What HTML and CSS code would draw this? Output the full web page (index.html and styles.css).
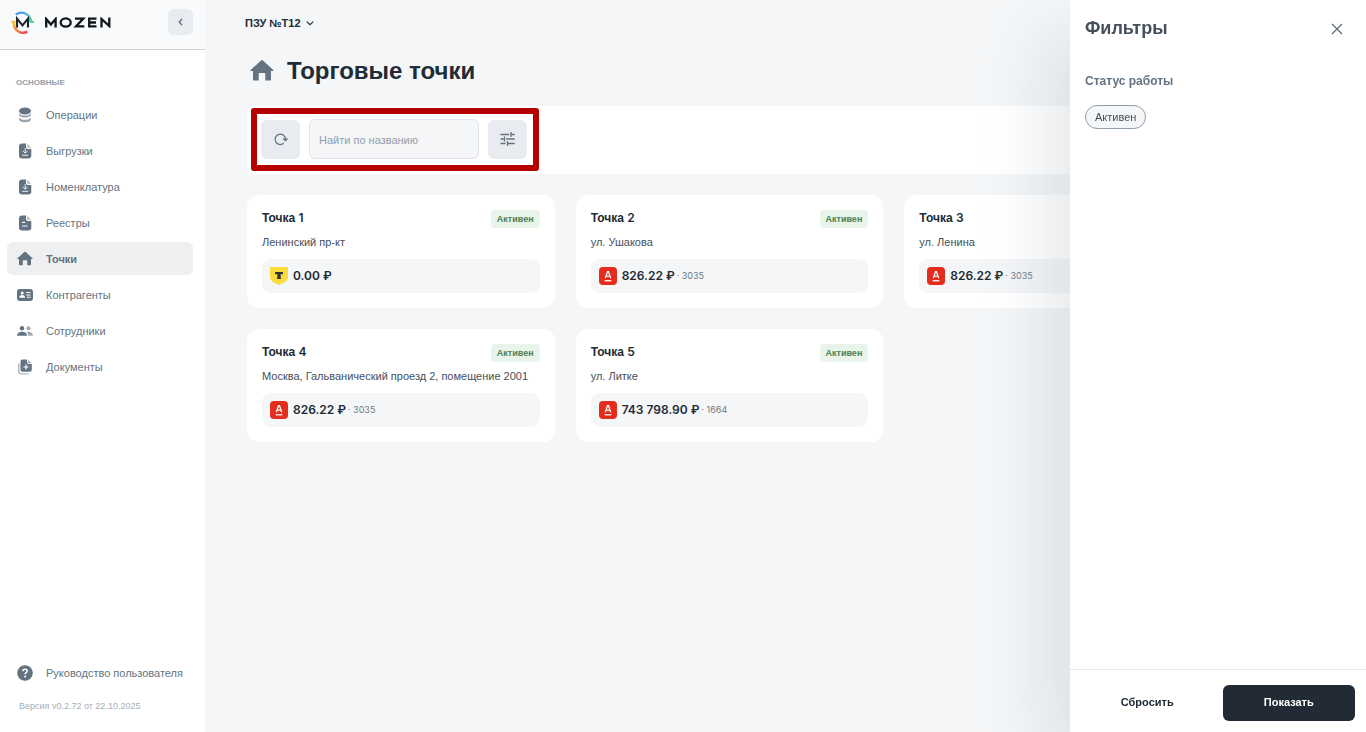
FILE: index.html
```html
<!DOCTYPE html>
<html lang="ru">
<head>
<meta charset="utf-8">
<meta name="viewport" content="width=device-width, initial-scale=1">
<title>Торговые точки</title>
<link rel="stylesheet" href="styles.css">
</head>
<body>
<svg class="sprite" aria-hidden="true">
  <symbol id="home" viewBox="0 0 24 24"><path d="M12.700 1.300a1 1 0 0 0-1.400 0L.7 10.900c-.5.500-.2 1.100.4 1.100H3v8.700c0 .5.3.8.8.8h4.900v-6.700c0-.5.3-.8.8-.8h5c.5 0 .8.3.8.8v6.700h4.900c.5 0 .8-.3.8-.8V12h1.900c.6 0 .9-.6.400-1.100z"/></symbol>
  <symbol id="file-down" viewBox="0 0 16 16"><path d="M5 .5h4v3.500a2 2 0 0 0 2 2h3.300v6.500a3 3 0 0 1-3 3H5a3 3 0 0 1-3-3v-9a3 3 0 0 1 3-3z"/><path opacity=".5" d="M10.200.7l4 4h-3a1 1 0 0 1-1-1z"/><path d="M8.200 5v5M5.900 7.900L8.200 10.200 10.500 7.900M5.200 12.300h6" fill="none" stroke="#fff" stroke-opacity=".85"/></symbol>
  <symbol id="file-text" viewBox="0 0 16 16"><path d="M5 .5h4v3.500a2 2 0 0 0 2 2h3.300v6.500a3 3 0 0 1-3 3H5a3 3 0 0 1-3-3v-9a3 3 0 0 1 3-3z"/><path opacity=".5" d="M10.200.7l4 4h-3a1 1 0 0 1-1-1z"/><path d="M5.200 7.300h3M5.200 11h5.400" fill="none" stroke="#fff" stroke-width="1.200"/></symbol>
  <symbol id="alfa" viewBox="0 0 18 18"><rect width="18" height="18" rx="4" fill="#e42d1c"/><path d="M6.300 11.200L8.500 4.600h1L11.700 11.200M7.100 9.100h3.800" fill="none" stroke="#fff" stroke-width="1.300"/><path d="M5.700 13.100h6.600v1.300H5.700z" fill="#fff"/></symbol>
  <symbol id="tbank" viewBox="0 0 18 18"><path d="M0 0h18v9.500c0 3-1.600 4.700-3.500 5.800L9 18l-5.500-2.700C1.600 14.200 0 12.500 0 9.500z" fill="#fadc3c"/><path d="M5 5h8v2.800c-.6-.6-1.300-.7-2.300-.7v3.600c0 .7.300 1.100.8 1.300h-5c.5-.2.800-.6.8-1.300V7.100c-1 0-1.700.1-2.300.7z" fill="#333"/></symbol>
</svg>
<div class="app">
  <aside class="sidebar">
    <header class="brand">
      <a class="logo" href="#" aria-label="MOZEN">
        <svg class="logo-mark" viewBox="0 0 24 24" fill="none" aria-hidden="true">
          <defs>
            <linearGradient id="cool" x1="4" y1="2" x2="23" y2="11" gradientUnits="userSpaceOnUse"><stop stop-color="#4a8fe0"/><stop offset=".6" stop-color="#52b4e0"/><stop offset="1" stop-color="#4ade80"/></linearGradient>
            <linearGradient id="warm" x1="1" y1="11" x2="17" y2="23" gradientUnits="userSpaceOnUse"><stop stop-color="#f5cf35"/><stop offset=".45" stop-color="#f28a3c"/><stop offset="1" stop-color="#e8365f"/></linearGradient>
          </defs>
          <path d="M5 3.800A10 10 0 0 1 21 11.400h2.800M20 8v3.400" stroke="url(#cool)" stroke-width="2.300"/>
          <path d="M.2 11.600H3.200A9.500 9.500 0 0 0 17 21.500" stroke="url(#warm)" stroke-width="2.600"/>
          <path d="M6.300 17.300V8l5.700 7 5.700-7v9.300" stroke="#1c2530" stroke-width="2.200"/>
        </svg>
        <svg class="logo-word" viewBox="0 0 66 11" fill="none" stroke="#11161d" stroke-width="2.300" aria-hidden="true">
          <path d="M1.200 10.500V2l4.700 5.500L10.600 2v8.500"/><ellipse cx="20.700" cy="5.500" rx="5" ry="4.200"/><path d="M30 1.600h8.300L31 9.400h8.300M51.500 1.600H44.200v7.800h7.300M44 5.500h7M56.500 10.500V2l7.800 7V.5"/>
        </svg>
      </a>
      <button class="collapse" type="button" aria-label="Свернуть меню"><svg viewBox="0 0 12 12"><path d="M7 2.800L4.200 6 7 9.200"/></svg></button>
    </header>
    <nav class="nav">
      <h2 class="nav-title">Основные</h2>
      <a class="nav-item" href="#"><svg viewBox="0 0 16 16"><ellipse cx="8" cy="4" rx="6" ry="3.500"/><path opacity=".65" d="M2 6.300c1 1.600 3.300 2.300 6 2.300s5-.7 6-2.300v1.500c0 1.600-2.700 2.800-6 2.800S2 9.400 2 7.800zM2 10.500c1 1.600 3.300 2.300 6 2.300s5-.7 6-2.300v1.700c0 1.700-2.700 3-6 3s-6-1.300-6-3z"/></svg>Операции</a>
      <a class="nav-item" href="#"><svg><use href="#file-down"/></svg>Выгрузки</a>
      <a class="nav-item" href="#"><svg><use href="#file-down"/></svg>Номенклатура</a>
      <a class="nav-item" href="#"><svg><use href="#file-text"/></svg>Реестры</a>
      <a class="nav-item nav-item-active" href="#" aria-current="page"><svg><use href="#home"/></svg>Точки</a>
      <a class="nav-item" href="#"><svg viewBox="0 0 16 16"><rect y="2" width="16" height="12" rx="3"/><g fill="#fff"><circle cx="5.200" cy="6" r="1.500"/><path d="M2.300 10.800c0-1.800 1.200-2.700 2.900-2.700s2.900.9 2.900 2.700zM9.200 5h4.300v1.100H9.200zM9.200 7.400h4.300v1.100H9.200zM10 9.800h3.500v1H10z"/></g></svg>Контрагенты</a>
      <a class="nav-item" href="#"><svg viewBox="0 0 16 16"><circle cx="5" cy="5.200" r="2.200"/><path d="M0 12.800c0-2.700 2-4.100 5-4.100s5 1.400 5 4.100z"/><g opacity=".6"><circle cx="11.500" cy="5.200" r="2"/><path d="M11 12.800c.1-1.800-.5-3-1.500-4 3.500-.6 6.500.6 6.500 4z"/></g></svg>Сотрудники</a>
      <a class="nav-item" href="#"><svg viewBox="0 0 16 16"><path opacity=".5" d="M1 4.500h1.500V12A2.200 2.200 0 0 0 4.700 14.200h7v1.300H4.500A3.500 3.500 0 0 1 1 12z"/><path d="M5.500.5H10V3a2 2 0 0 0 2 2h2.800v5.800a2 2 0 0 1-2 2H5.500a2 2 0 0 1-2-2V2.500a2 2 0 0 1 2-2z"/><path opacity=".6" d="M11 .7l3.500 3.500H12a1 1 0 0 1-1-1z"/><path d="M6.500 8h5M9 5.500v5" stroke="#fff" stroke-width="1.200"/></svg>Документы</a>
    </nav>
    <footer class="sidebar-foot">
      <a class="nav-item" href="#"><svg viewBox="0 0 16 16"><circle cx="8" cy="8" r="7.800"/><path d="M5.900 6.200c0-1.300.9-2 2.200-2s2.100.7 2.100 1.800c0 1.500-2 1.600-2 3.200" fill="none" stroke="#fff" stroke-width="1.600"/><circle cx="8.100" cy="11.600" r="1" fill="#fff"/></svg>Руководство пользователя</a>
      <p class="version">Версия v0.2.72 от 22.10.2025</p>
    </footer>
  </aside>

  <main class="main">
    <button class="account" type="button">ПЗУ №T12<svg viewBox="0 0 12 12"><path d="M2.700 4.600L6 7.700l3.300-3.100"/></svg></button>
    <h1 class="page-title"><svg><use href="#home"/></svg>Торговые точки</h1>
    <section class="toolbar">
      <form class="tools">
        <button class="tool" type="button" aria-label="Обновить"><svg viewBox="0 0 16 16"><path d="M10.700 12.300A5.200 5.200 0 1 1 12.500 8.500M10.300 7.500l2.200 2 2-2"/></svg></button>
        <input class="search" type="search" placeholder="Найти по названию" aria-label="Найти по названию">
        <button class="tool" type="button" aria-label="Фильтры"><svg viewBox="0 0 16 16"><path d="M.5 3.500h8.700M11 1v5M11 3.500h3.700M.5 8h3.300M4.500 5.500v5M6.200 8h8.500M.5 12.500h5M7.500 10v5M7.500 12.500h7.200"/></svg></button>
      </form>
    </section>
    <section class="cards">
      <article class="card">
        <div class="card-head"><h3 class="card-title">Точка <span class="num">1</span></h3><span class="badge">Активен</span></div>
        <p class="address">Ленинский пр-кт</p>
        <div class="balance"><svg><use href="#tbank"/></svg><strong class="sum">0.00 ₽</strong></div>
      </article>
      <article class="card">
        <div class="card-head"><h3 class="card-title">Точка <span class="num">2</span></h3><span class="badge">Активен</span></div>
        <p class="address">ул. Ушакова</p>
        <div class="balance"><svg><use href="#alfa"/></svg><strong class="sum">826.22 ₽</strong><span class="tail">· 3035</span></div>
      </article>
      <article class="card">
        <div class="card-head"><h3 class="card-title">Точка <span class="num">3</span></h3><span class="badge">Активен</span></div>
        <p class="address">ул. Ленина</p>
        <div class="balance"><svg><use href="#alfa"/></svg><strong class="sum">826.22 ₽</strong><span class="tail">· 3035</span></div>
      </article>
      <article class="card">
        <div class="card-head"><h3 class="card-title">Точка <span class="num">4</span></h3><span class="badge">Активен</span></div>
        <p class="address">Москва, Гальванический проезд 2, помещение 2001</p>
        <div class="balance"><svg><use href="#alfa"/></svg><strong class="sum">826.22 ₽</strong><span class="tail">· 3035</span></div>
      </article>
      <article class="card">
        <div class="card-head"><h3 class="card-title">Точка <span class="num">5</span></h3><span class="badge">Активен</span></div>
        <p class="address">ул. Литке</p>
        <div class="balance"><svg><use href="#alfa"/></svg><strong class="sum">743 798.90 ₽</strong><span class="tail">· 1664</span></div>
      </article>
    </section>
  </main>

  <aside class="drawer" aria-label="Фильтры">
    <header class="drawer-head">
      <h2 class="drawer-title">Фильтры</h2>
      <button class="close" type="button" aria-label="Закрыть"><svg viewBox="0 0 12 12"><path d="M1 1l10 10M11 1L1 11"/></svg></button>
    </header>
    <div class="drawer-body">
      <h3 class="group-title">Статус работы</h3>
      <button class="chip" type="button">Активен</button>
    </div>
    <footer class="drawer-foot">
      <button class="btn" type="button">Сбросить</button>
      <button class="btn btn-dark" type="button">Показать</button>
    </footer>
  </aside>
</div>
</body>
</html>
```
FILE: styles.css
```css
* {
  box-sizing: border-box;
}

body {
  margin: 0;
  font-family: "Liberation Sans", Arial, sans-serif;
  font-size: 11px;
  line-height: 16px;
  color: #212b36;
  background: #f4f6f8;
}

h1, h2, h3, p {
  margin: 0;
}

button, input {
  font: inherit;
  color: inherit;
}

button {
  display: flex;
  align-items: center;
  justify-content: center;
  padding: 0;
  border: 0;
  background: none;
  cursor: pointer;
}

a {
  color: inherit;
  text-decoration: none;
}

svg {
  flex: none;
}

.sprite {
  position: absolute;
  width: 0;
  height: 0;
}

.app {
  display: flex;
  min-height: 100vh;
  overflow: hidden;
}

/* Sidebar */
.sidebar {
  display: flex;
  flex: none;
  flex-direction: column;
  width: 205px;
  background: #fff;
}

.brand {
  display: flex;
  align-items: center;
  justify-content: space-between;
  height: 50px;
  padding: 0 12px 5px 11px;
  background: #f9fafb;
  border-bottom: 1px solid #c9d1d9;
}

.logo {
  display: flex;
  align-items: center;
  gap: 11px;
}

.logo-mark {
  width: 23px;
  height: 23px;
}

.logo-word {
  width: 66px;
  height: 11px;
}

.collapse {
  width: 25px;
  height: 26px;
  border-radius: 6px;
  background: #e8ebef;
}

.collapse svg,
.account svg {
  width: 12px;
  height: 12px;
  fill: none;
  stroke: #55626f;
  stroke-width: 1.2;
}

.nav {
  display: flex;
  flex: 1;
  flex-direction: column;
  gap: 3px;
  padding: 25px 12px 0 7px;
}

.nav-title {
  padding: 0 9px 4px;
  font-size: 8px;
  line-height: 16px;
  color: #919eab;
  text-transform: uppercase;
}

.nav-item {
  display: flex;
  align-items: center;
  gap: 13px;
  height: 33px;
  padding: 0 10px;
  border-radius: 6px;
  color: #637381;
  white-space: nowrap;
}

.nav-item svg {
  width: 16px;
  height: 16px;
  fill: #637381;
}

.nav-item-active {
  font-weight: 700;
  background: #edeff1;
}

.sidebar-foot {
  padding: 0 12px 18px 7px;
}

.version {
  padding: 9px 12px 0;
  font-size: 9px;
  color: #a5afba;
}

/* Main column */
.main {
  flex: 1;
  min-width: 0;
  padding: 15px 42px 40px;
}

.account {
  gap: 3px;
  margin-left: -2px;
  font-weight: 700;
}

.account svg {
  stroke: #212b36;
}

.page-title {
  display: flex;
  align-items: center;
  gap: 13px;
  padding: 24px 3px 19px;
  font-size: 24px;
  line-height: 32px;
}

.page-title svg {
  width: 24px;
  height: 24px;
  fill: #637381;
}

.toolbar {
  display: flex;
  max-width: 965px;
  padding: 2px 4px 3px;
  border-radius: 6px;
  background: #fff;
}

.tools {
  display: flex;
  align-items: center;
  gap: 9px;
  padding: 5px 6px 6px 4px;
  border: 6px solid #b50000;
  border-radius: 3px;
}

.tool {
  width: 39px;
  height: 39px;
  border-radius: 6px;
  background: #e8ebef;
}

.tool svg {
  width: 16px;
  height: 16px;
  fill: none;
  stroke: #637381;
  stroke-width: 1.3;
}

.search {
  width: 170px;
  height: 40px;
  padding: 1px 9px 0;
  border: 1px solid #dfe3e8;
  border-radius: 6px;
  background: #f4f6f8;
}

.search::placeholder {
  color: #919eab;
}

.cards {
  display: grid;
  grid-template-columns: repeat(3, minmax(0, 1fr));
  gap: 21px;
  max-width: 965px;
  margin-top: 21px;
}

.card {
  padding: 15px;
  border-radius: 12px;
  background: #fff;
}

.card-head {
  display: flex;
  justify-content: space-between;
}

.card-title {
  font-size: 12px;
  line-height: 16px;
}

.num {
  font-family: Inter, sans-serif;
  font-weight: 600;
}

.badge {
  padding: 0 6px;
  border-radius: 4px;
  font-size: 9px;
  font-weight: 700;
  line-height: 18px;
  color: #4f8050;
  background: #e8f3e9;
}

.address {
  padding: 6px 0 9px;
  color: #454f5b;
  white-space: nowrap;
}

.balance {
  display: flex;
  align-items: center;
  height: 34px;
  padding: 0 8px;
  border-radius: 9px;
  background: #f4f6f8;
}

.balance svg {
  width: 18px;
  height: 18px;
}

.sum {
  margin-left: 5px;
  font-family: Inter, sans-serif;
  font-size: 12px;
  font-weight: 600;
}

.tail {
  margin-left: 2px;
  font-family: Inter, sans-serif;
  font-size: 9px;
  color: #6d7a87;
}

/* Filter drawer */
.drawer {
  position: fixed;
  top: 0;
  right: 0;
  bottom: 0;
  display: flex;
  flex-direction: column;
  width: 296px;
  background: #fff;
  box-shadow: -30px 30px 60px -6px rgba(145, 158, 171, 0.24);
}

.drawer-head {
  display: flex;
  align-items: center;
  justify-content: space-between;
  padding: 16px 23px 16px 15px;
}

.drawer-title {
  font-size: 18px;
  line-height: 25px;
  color: #454f5b;
}

.close svg {
  width: 12px;
  height: 12px;
  fill: none;
  stroke: #637381;
  stroke-width: 1.4;
}

.drawer-body {
  flex: 1;
  padding: 16px 15px;
}

.group-title {
  margin-bottom: 16px;
  font-size: 12px;
  line-height: 16px;
  color: #637381;
}

.chip {
  height: 24px;
  padding: 0 9px 1px;
  border: 1px solid #919eab;
  border-radius: 12px;
  color: #454f5b;
  background: #f4f6f8;
}

.drawer-foot {
  display: flex;
  gap: 9px;
  padding: 15px 11px 11px;
  border-top: 1px solid #e4e7ea;
}

.btn {
  flex: 1;
  height: 36px;
  padding-bottom: 2px;
  border-radius: 6px;
  font-weight: 700;
}

.btn-dark {
  color: #fff;
  background: #222b35;
}
```
